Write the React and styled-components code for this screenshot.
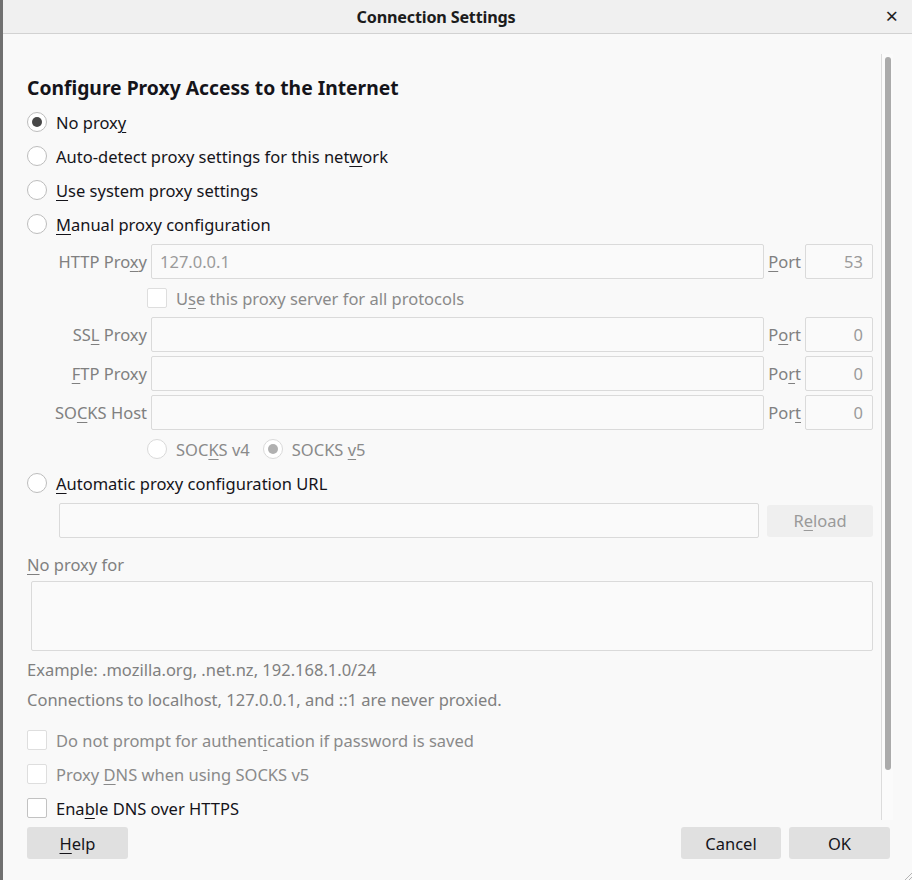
import React from "react";
import styled, { createGlobalStyle } from "styled-components";

const Global = createGlobalStyle`
  html, body { margin: 0; padding: 0; background: #f9f9f9; }
  body { font-family: "Noto Sans", "Open Sans", sans-serif; font-size: 16.5px; color: #15141a; }
`;

const Frame = styled.div`
  position: relative;
  width: 912px;
  height: 880px;
  box-sizing: border-box;
  border-left: 3px solid #707070;
  background: #f9f9f9;
  display: flex;
  flex-direction: column;
  overflow: hidden;
`;

const TitleBar = styled.div`
  height: 33px;
  flex: none;
  background: #f0f0f0;
  border-bottom: 1px solid #d2d2d2;
  display: flex;
  align-items: center;
  justify-content: center;
  padding-right: 43px;
  position: relative;
`;

const Title = styled.div`
  font-weight: 700;
  font-size: 16.2px;
  color: #1c1c1c;
  letter-spacing: -0.2px;
`;

const Close = styled.div`
  position: absolute;
  right: 14px;
  top: 4px;
  font-size: 22px;
  line-height: 22px;
  color: #222;
`;

const Scroller = styled.div`
  height: 786px;
  flex: none;
  display: flex;
`;

const Content = styled.div`
  flex: 1;
  padding: 40px 8px 0 24px;
  display: flex;
  flex-direction: column;
  & > * {
    flex: none;
  }
`;

const Heading = styled.h1`
  margin: 0 0 3px 0;
  font-size: 19.3px;
  font-weight: 700;
  line-height: 28px;
  color: #15141a;
`;

const Track = styled.div`
  width: 11px;
  margin: 20px 19px 0 0;
  border-left: 1px solid #dcdcdc;
  background: #fbfbfb;
  padding-top: 3px;
  display: flex;
  justify-content: center;
`;

const Thumb = styled.div`
  width: 6px;
  height: 713px;
  border-radius: 3px;
  background: #ababab;
`;

const Row = styled.label`
  display: flex;
  align-items: center;
  height: ${(p) => p.h || 34}px;
  gap: 9px;
  color: ${(p) => (p.disabled ? "#8a8a8a" : "#15141a")};
  white-space: nowrap;
`;

const Radio = styled.span`
  width: 20px;
  height: 20px;
  box-sizing: border-box;
  border-radius: 50%;
  border: 1px solid ${(p) => (p.disabled ? "#d9d9d9" : "#bdbdbd")};
  background: #fff;
  display: flex;
  align-items: center;
  justify-content: center;
  flex: none;
  &::after {
    content: "";
    display: ${(p) => (p.checked ? "block" : "none")};
    width: 10px;
    height: 10px;
    border-radius: 50%;
    background: ${(p) => (p.disabled ? "#b0b0b0" : "#474747")};
  }
`;

const Check = styled.span`
  width: 20px;
  height: 20px;
  box-sizing: border-box;
  border-radius: 2px;
  border: 1px solid ${(p) => (p.disabled ? "#dedede" : "#c2c2c2")};
  background: #fff;
  flex: none;
`;

const Key = styled.span`
  text-decoration: underline;
  text-underline-offset: 3px;
  text-decoration-thickness: 1px;
`;

const ProxyGrid = styled.div`
  display: grid;
  grid-template-columns: 96px 1fr auto 68px;
  column-gap: 4px;
  row-gap: 4px;
  margin: 3px 0 2px 24px;
  color: #808080;
`;

const FieldLabel = styled.div`
  display: flex;
  align-items: center;
  justify-content: flex-end;
  height: 35px;
  white-space: nowrap;
`;

const Input = styled.div`
  height: 35px;
  box-sizing: border-box;
  border: 1px solid #dadada;
  border-radius: 2px;
  background: #fafafa;
  display: flex;
  align-items: center;
  justify-content: ${(p) => (p.right ? "flex-end" : "flex-start")};
  padding: 0 9px 0 8px;
  color: #9a9a9a;
  flex: ${(p) => (p.grow ? 1 : "none")};
`;

const Span = styled.div`
  grid-column: 2 / -1;
  margin-left: -4px;
  display: flex;
  align-items: center;
  gap: 13px;
`;

const UrlRow = styled.div`
  display: flex;
  align-items: center;
  gap: 8px;
  margin: 3px 0 0 32px;
`;

const Button = styled.div`
  width: ${(p) => p.w || 100}px;
  height: 32px;
  box-sizing: border-box;
  border-radius: 3px;
  background: ${(p) => (p.disabled ? "#efefef" : "#e0e0e0")};
  color: ${(p) => (p.disabled ? "#9a9a9a" : "#15141a")};
  display: flex;
  align-items: center;
  justify-content: center;
  flex: none;
`;

const Caption = styled.div`
  height: 30px;
  display: flex;
  align-items: center;
  color: #808080;
  margin-top: ${(p) => p.mt || 0}px;
`;

const TextArea = styled.div`
  height: 70px;
  box-sizing: border-box;
  border: 1px solid #dadada;
  border-radius: 2px;
  background: #fafafa;
  margin: 2px 0 3px 4px;
`;

const Options = styled.div`
  margin-top: 9px;
  display: flex;
  flex-direction: column;
`;

const Footer = styled.div`
  display: flex;
  align-items: center;
  padding: 7px 22px 0 24px;
  gap: 8px;
`;

const Spacer = styled.div`
  flex: 1;
`;

const Grip = styled.svg`
  position: absolute;
  right: 0;
  bottom: 0;
`;

export default function App() {
  return (
    <>
      <Global />
      <Frame>
        <TitleBar>
          <Title>Connection Settings</Title>
          <Close>×</Close>
        </TitleBar>
        <Scroller>
          <Content>
            <Heading>Configure Proxy Access to the Internet</Heading>
            <Row>
              <Radio checked />
              <span>No prox<Key>y</Key></span>
            </Row>
            <Row>
              <Radio />
              <span>Auto-detect proxy settings for this net<Key>w</Key>ork</span>
            </Row>
            <Row>
              <Radio />
              <span><Key>U</Key>se system proxy settings</span>
            </Row>
            <Row>
              <Radio />
              <span><Key>M</Key>anual proxy configuration</span>
            </Row>
            <ProxyGrid>
              <FieldLabel><span>HTTP Pro<Key>x</Key>y</span></FieldLabel>
              <Input>127.0.0.1</Input>
              <FieldLabel><span><Key>P</Key>ort</span></FieldLabel>
              <Input right>53</Input>

              <Span>
                <Row h={30} disabled>
                  <Check disabled />
                  <span>U<Key>s</Key>e this proxy server for all protocols</span>
                </Row>
              </Span>

              <FieldLabel><span>SS<Key>L</Key> Proxy</span></FieldLabel>
              <Input />
              <FieldLabel><span>P<Key>o</Key>rt</span></FieldLabel>
              <Input right>0</Input>

              <FieldLabel><span><Key>F</Key>TP Proxy</span></FieldLabel>
              <Input />
              <FieldLabel><span>Po<Key>r</Key>t</span></FieldLabel>
              <Input right>0</Input>

              <FieldLabel><span>SO<Key>C</Key>KS Host</span></FieldLabel>
              <Input />
              <FieldLabel><span>Por<Key>t</Key></span></FieldLabel>
              <Input right>0</Input>

              <Span>
                <Row h={30} disabled>
                  <Radio disabled />
                  <span>SOC<Key>K</Key>S v4</span>
                </Row>
                <Row h={30} disabled>
                  <Radio disabled checked />
                  <span>SOCKS <Key>v</Key>5</span>
                </Row>
              </Span>
            </ProxyGrid>
            <Row>
              <Radio />
              <span><Key>A</Key>utomatic proxy configuration URL</span>
            </Row>
            <UrlRow>
              <Input grow />
              <Button w={106} disabled><span>R<Key>e</Key>load</span></Button>
            </UrlRow>
            <Caption mt={11}><span><Key>N</Key>o proxy for</span></Caption>
            <TextArea />
            <Caption><span>Example: .mozilla.org, .net.nz, 192.168.1.0/24</span></Caption>
            <Caption><span>Connections to localhost, 127.0.0.1, and ::1 are never proxied.</span></Caption>
            <Options>
              <Row disabled>
                <Check disabled />
                <span>Do not prompt for authent<Key>i</Key>cation if password is saved</span>
              </Row>
              <Row disabled>
                <Check disabled />
                <span>Proxy <Key>D</Key>NS when using SOCKS v5</span>
              </Row>
              <Row>
                <Check />
                <span>Ena<Key>b</Key>le DNS over HTTPS</span>
              </Row>
            </Options>
          </Content>
          <Track>
            <Thumb />
          </Track>
        </Scroller>
        <Footer>
          <Button w={101}><span><Key>H</Key>elp</span></Button>
          <Spacer />
          <Button w={100}>Cancel</Button>
          <Button w={101}>OK</Button>
        </Footer>
        <Grip width="10" height="10" viewBox="0 0 10 10">
          <path d="M10 3 L3 10 M10 7 L7 10" stroke="#b5b5b5" strokeWidth="1" />
        </Grip>
      </Frame>
    </>
  );
}
